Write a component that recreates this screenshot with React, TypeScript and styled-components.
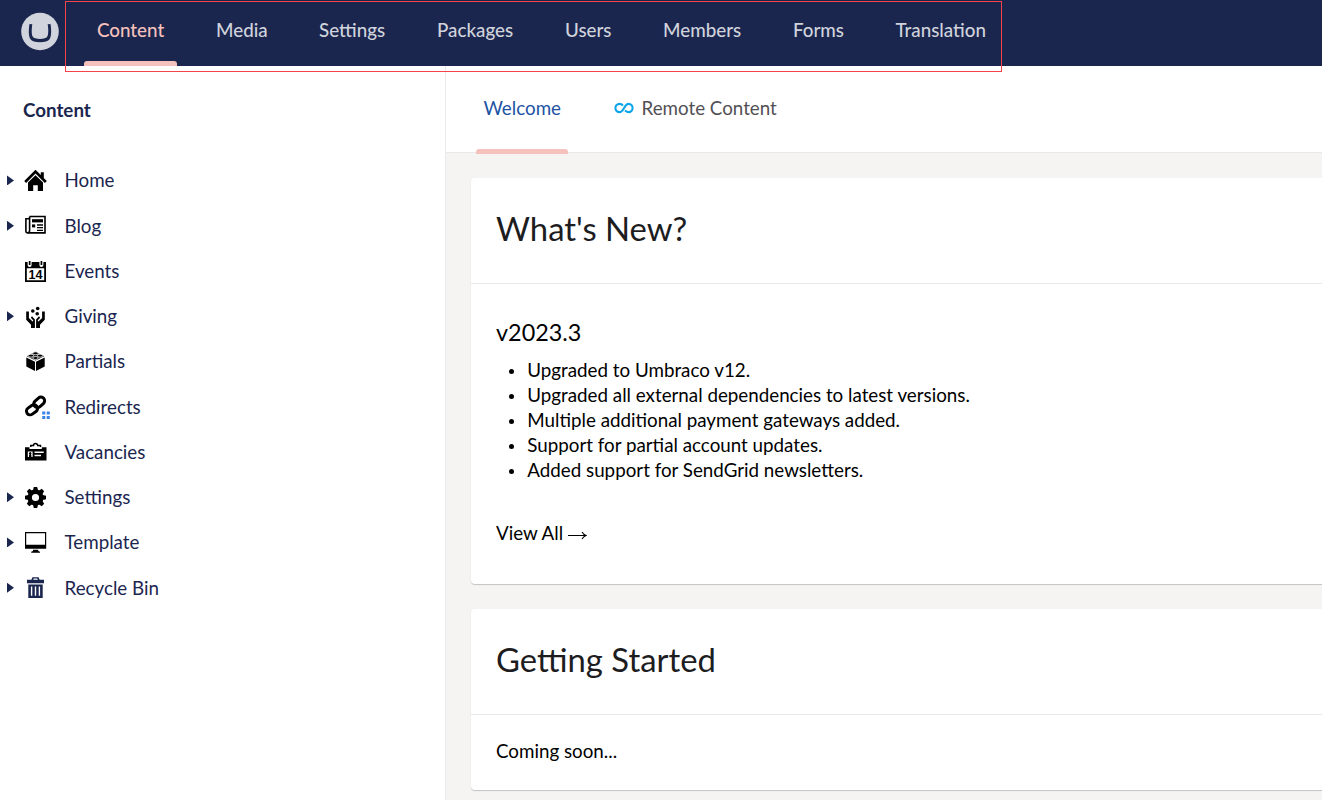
import React from 'react';
import styled, { createGlobalStyle } from 'styled-components';

const GlobalStyle = createGlobalStyle`
  * { box-sizing: border-box; }
  body {
    margin: 0;
    background: #fff;
    font-family: Lato, "Liberation Sans", sans-serif;
    font-size: 18.77px;
    overflow: hidden;
  }
`;

const Page = styled.div`
  width: 100vw;
  height: 100vh;
  display: flex;
  flex-direction: column;
  overflow: hidden;
`;

const TopBar = styled.header`
  height: 66px;
  flex: none;
  background: #1b264f;
  display: flex;
  position: relative;
  z-index: 1;
`;

const LogoLink = styled.div`
  width: 65px;
  padding: 12px 0 0 21px;
  svg { display: block; }
`;

const Nav = styled.nav`
  margin-top: 1px;
  width: 937px;
  height: 71px;
  border: 1px solid #f4444a;
  padding-left: 18px;
  display: flex;
`;

const NavItem = styled.a<{ $w: number }>`
  width: ${(p) => p.$w}px;
  flex: none;
`;

const NavLabel = styled.span<{ $active?: boolean }>`
  display: block;
  width: max-content;
  height: 64px;
  padding: 0 13px;
  line-height: 56px;
  font-weight: 500;
  color: ${(p) => (p.$active ? '#f5c1bc' : '#d0d3dc')};
  white-space: nowrap;
  position: relative;
  &::after {
    content: '';
    display: ${(p) => (p.$active ? 'block' : 'none')};
    position: absolute;
    left: 0;
    right: 0;
    bottom: 0;
    height: 5px;
    border-radius: 3px 3px 0 0;
    background: #f5c1bc;
  }
`;

const Body = styled.div`
  flex: 1;
  display: flex;
  min-height: 0;
`;

const Sidebar = styled.aside`
  width: 446px;
  flex: none;
  border-right: 1px solid #e9e9eb;
  color: #1b264f;
`;

const SideTitle = styled.h5`
  margin: 0;
  height: 91.84px;
  padding-left: 23px;
  font-size: 18.77px;
  font-weight: 700;
  line-height: 88px;
`;

const TreeRow = styled.div`
  height: 45.25px;
  display: flex;
  align-items: center;
  padding-left: 7px;
`;

const Caret = styled.span<{ $shown: boolean }>`
  width: 7px;
  height: 10px;
  margin-right: 8px;
  background: ${(p) => (p.$shown ? '#1b264f' : 'transparent')};
  clip-path: polygon(0 0, 100% 50%, 0 100%);
`;

const IconBox = styled.svg`
  width: 28px;
  height: 28px;
  margin: 1px 14.5px 0 0;
  overflow: visible;
`;

const TreeLabel = styled.span`
  line-height: 24px;
`;

const Main = styled.main`
  flex: 1;
  min-width: 0;
  display: flex;
  flex-direction: column;
  background: #f5f4f3;
`;

const Tabs = styled.div`
  height: 87px;
  flex: none;
  background: #fff;
  border-bottom: 1px solid #e9e9eb;
  display: flex;
  padding-left: 30px;
`;

const Tab = styled.a<{ $active?: boolean }>`
  position: relative;
  height: 88px;
  padding: 0 7px 0 7.5px;
  margin-right: 38.5px;
  display: flex;
  line-height: 84px;
  white-space: nowrap;
  color: ${(p) => (p.$active ? '#2152a3' : '#515054')};
  &::after {
    content: '';
    display: ${(p) => (p.$active ? 'block' : 'none')};
    position: absolute;
    left: 0;
    right: 0;
    bottom: 0;
    height: 5px;
    border-radius: 3px 3px 0 0;
    background: #f5c1bc;
  }
`;

const TabIcon = styled.svg`
  width: 20px;
  height: 12px;
  margin: 36px 7.5px 0 0;
`;

const Cards = styled.div`
  padding: 25px 0 0 25px;
  display: flex;
  flex-direction: column;
  gap: 25px;
`;

const Card = styled.section<{ $h: number }>`
  height: ${(p) => p.$h}px;
  margin-right: -10px;
  background: #fff;
  border-radius: 4px;
  box-shadow: 0 1px 1px rgba(0, 0, 0, 0.2);
  color: #000;
`;

const CardHeader = styled.h2`
  margin: 0;
  height: 106px;
  padding-left: 25px;
  border-bottom: 1px solid #e9e9eb;
  font-size: 32.85px;
  font-weight: 400;
  line-height: 102px;
  color: #1d1d1f;
`;

const CardBody = styled.div`
  padding-left: 25px;
`;

const Version = styled.h3`
  margin: 0;
  padding-top: 33px;
  font-size: 23.4px;
  font-weight: 400;
  line-height: 30px;
`;

const Changes = styled.ul`
  margin: 10px 0 0;
  padding-left: 31.3px;
  line-height: 25px;
  list-style: none;
`;

const Change = styled.li`
  display: flex;
  align-items: center;
  &::before {
    content: '';
    flex: none;
    width: 5px;
    height: 5px;
    margin: 4px 13px 0 -18px;
    border-radius: 50%;
    background: #000;
  }
`;

const ViewAll = styled.a`
  display: block;
  margin-top: 38px;
  line-height: 25px;
`;

const Arrow = styled.svg`
  width: 19px;
  height: 10px;
  margin-left: 5px;
  vertical-align: 0;
`;

const Note = styled.p`
  margin: 0;
  line-height: 72px;
`;

const nav: [string, number][] = [
  ['Content', 119], ['Media', 103], ['Settings', 118], ['Packages', 128],
  ['Users', 98], ['Members', 130], ['Forms', 102.5], ['Translation', 120],
];

const gearTeeth = [0, 45, 90, 135, 180, 225, 270, 315];

const icons: Record<string, React.ReactNode> = {
  home: (
    <>
      <path d="M13.5 2.8 2.2 14l1.9 1.9 9.4-9.3 9.4 9.3 1.9-1.9-3-3V5.2h-3v2.9z" />
      <path d="M13.5 8.2 6 15.6V24h5.2v-5.8h4.6V24H21v-8.4z" />
    </>
  ),
  news: (
    <g fill="none" stroke="#000" strokeWidth="1.6">
      <path d="M7.6 4.500h15.400v16.400H5.600a1.700 1.700 0 0 1-1.700-1.700V6.700h3.500" />
      <path d="M7.600 4.500v14.500a1.600 1.600 0 0 1-1.600 1.600" />
      <path d="M10 8.800h11" strokeWidth="3.200" />
      <path d="M10 13.900h3.200" strokeWidth="3" />
      <path d="M15 13h6M15 15.700h6M15 18.400h6" strokeWidth="1.300" />
    </g>
  ),
  calendar: (
    <>
      <path fillRule="evenodd" d="M3 5h2.600v3a2 2 0 0 0 4 0V5h7.800v3a2 2 0 0 0 4 0V5H24v20H3zM4.800 11.200V23.200h17.400V11.200z" />
      <path d="M6.800 4h1.700v4H6.800zM18.600 4h1.700v4h-1.700z" />
      <text x="13.500" y="21.700" fontFamily="Liberation Sans, sans-serif" fontSize="12.500" fontWeight="700" textAnchor="middle">14</text>
    </>
  ),
  giving: (
    <>
      <path d="M4.200 8.500h2.700v6.500l3.700 3.400c.9-.3.700-1.100.1-1.700l-1.900-2 1.200-1.500 2.900 3.400V25H9v-3.200l-4.800-5z" />
      <path d="M22.800 8.500h-2.700v6.500l-3.700 3.400c-.9-.3-.7-1.100-.1-1.700l1.900-2-1.200-1.500-2.900 3.400V25H18v-3.200l4.800-5z" />
      <circle cx="15.700" cy="5.500" r="1.800" /><circle cx="10.800" cy="8" r="1.800" /><circle cx="15.200" cy="10.800" r="1.800" />
    </>
  ),
  brick: (
    <>
      <path d="M13.500 3.800 22.200 8.200 13.500 12.600 4.800 8.200z" />
      <path d="M4.300 9.400 13 13.800v9.200l-8.700-4.600zM22.700 9.400 14 13.800v9.200l8.700-4.600z" />
      <g fill="#000" stroke="#fff" strokeWidth=".8">
        <ellipse cx="13.500" cy="5.300" rx="2.700" ry="1.500" /><ellipse cx="8.900" cy="7.700" rx="2.700" ry="1.500" />
        <ellipse cx="18.100" cy="7.700" rx="2.700" ry="1.500" /><ellipse cx="13.500" cy="10" rx="2.700" ry="1.500" />
      </g>
    </>
  ),
  link: (
    <>
      <g fill="none" stroke="#000" strokeWidth="3">
        <rect x="-6" y="-3.700" width="12" height="7.400" rx="3.700" transform="translate(17.200 9.300) rotate(-42)" />
        <rect x="-6" y="-3.700" width="12" height="7.400" rx="3.700" transform="translate(10 16.800) rotate(-36)" />
      </g>
      <path fill="#3b82e6" d="M20.200 18.500h3.100v3.100h-3.100zM24.700 18.500h3.100v3.100h-3.100zM20.200 23h3.100v3.100h-3.100zM24.700 23h3.100v3.100h-3.100z" />
    </>
  ),
  badge: (
    <>
      <path d="M8.800 9V7.600h2.700a2.100 2.100 0 0 1 4.200 0h2.800V9" fill="none" stroke="#000" strokeWidth="1.500" />
      <path fillRule="evenodd" d="M3 9.300h4.500v1.700h12.300V9.300h4.700v13.200H3zM5.800 13.500v5.400h4.800v-5.400zm6.700 0v1.500h9.200v-1.500zm0 3.300v1.500h6.500v-1.500z" />
      <path d="M7 19v-1.700l.6-.6a1.300 1.300 0 1 1 1.200 0l.6.6V19z" />
    </>
  ),
  gear: (
    <>
      <circle cx="13.500" cy="13.500" r="5.800" fill="none" stroke="#000" strokeWidth="4.400" />
      {gearTeeth.map((a) => (
        <path key={a} d="M11 6.300 11.800 3h3.400l.8 3.300z" transform={`rotate(${a} 13.500 13.500)`} />
      ))}
    </>
  ),
  screen: (
    <path fillRule="evenodd" d="M3 3h21.200v16.700H3zM4.200 4.200v11.600h18.800V4.200zM11 20.800h5.200v1.200l1.800.8v1H9.200v-1l1.800-.8z" />
  ),
  trash: (
    <g fill="#1b264f">
      <path fillRule="evenodd" d="M5 5.800h4.400l1-2.600h6.200l1 2.600H22v3.500H5zm6.200 0h4.600l-.5-1.200h-3.600z" />
      <path fillRule="evenodd" d="M6.300 10.500h14.400v13.600H6.300zM8.900 12.400v9.400h1.400v-9.400zm3.900 0v9.400h1.400v-9.400zm3.900 0v9.400h1.400v-9.400z" />
    </g>
  ),
};

const tree: [string, string, boolean][] = [
  ['Home', 'home', true], ['Blog', 'news', true], ['Events', 'calendar', false],
  ['Giving', 'giving', true], ['Partials', 'brick', false], ['Redirects', 'link', false],
  ['Vacancies', 'badge', false], ['Settings', 'gear', true], ['Template', 'screen', true],
  ['Recycle Bin', 'trash', true],
];

const changes = [
  'Upgraded to Umbraco v12.',
  'Upgraded all external dependencies to latest versions.',
  'Multiple additional payment gateways added.',
  'Support for partial account updates.',
  'Added support for SendGrid newsletters.',
];

export default function App() {
  return (
    <Page>
      <GlobalStyle />
      <TopBar>
        <LogoLink>
          <svg width="38" height="39" viewBox="0 0 38 39">
            <circle cx="19" cy="19.500" r="18.800" fill="#d1d4dc" />
            <path
              d="M11.300 12.300 8.500 12c-1 6-1 12 .8 15 1.600 2.500 5 3.200 9.700 3.200s8.100-.7 9.700-3.200c1.800-3 1.800-9 .8-15l-2.800.3c.8 5 .8 10.200-.4 12.300-1.100 1.900-3.500 2.300-7.300 2.300s-6.200-.4-7.300-2.300c-1.200-2.100-1.200-7.300-.4-12.300z"
              fill="#1b264f"
            />
          </svg>
        </LogoLink>
        <Nav>
          {nav.map(([label, w], i) => (
            <NavItem key={label} $w={w}>
              <NavLabel $active={i === 0}>{label}</NavLabel>
            </NavItem>
          ))}
        </Nav>
      </TopBar>
      <Body>
        <Sidebar>
          <SideTitle>Content</SideTitle>
          {tree.map(([label, icon, open]) => (
            <TreeRow key={label}>
              <Caret $shown={open} />
              <IconBox viewBox="0 0 28 28">{icons[icon]}</IconBox>
              <TreeLabel>{label}</TreeLabel>
            </TreeRow>
          ))}
        </Sidebar>
        <Main>
          <Tabs>
            <Tab $active>Welcome</Tab>
            <Tab>
              <TabIcon viewBox="0 0 20 12" fill="none" stroke="#0ba5e9" strokeWidth="2.100">
                <path d="M9 3.600C8 2.400 6.800 1.900 5.500 1.900a4.100 4.100 0 0 0 0 8.200c4.500 0 4.700-8.200 9-8.200a4.100 4.100 0 0 1 0 8.200c-1.300 0-2.500-.5-3.500-1.700" />
              </TabIcon>
              Remote Content
            </Tab>
          </Tabs>
          <Cards>
            <Card $h={406}>
              <CardHeader>What's New?</CardHeader>
              <CardBody>
                <Version>v2023.3</Version>
                <Changes>
                  {changes.map((c) => <Change key={c}>{c}</Change>)}
                </Changes>
                <ViewAll>
                  View All
                  <Arrow viewBox="0 0 19 10" fill="none" stroke="#000" strokeWidth="1.100">
                    <path d="M0 5.500h18M14 2q1.500 2.500 4 3.500-2.500 1-4 3.500" />
                  </Arrow>
                </ViewAll>
              </CardBody>
            </Card>
            <Card $h={181}>
              <CardHeader>Getting Started</CardHeader>
              <CardBody><Note>Coming soon...</Note></CardBody>
            </Card>
          </Cards>
        </Main>
      </Body>
    </Page>
  );
}
